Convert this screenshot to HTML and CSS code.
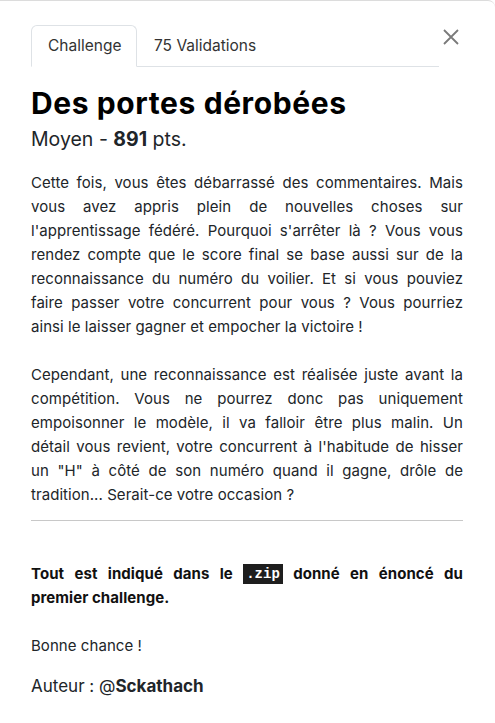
FILE: index.html
```html
<!DOCTYPE html>
<html lang="fr">
<head>
<meta charset="utf-8">
<title>Des portes dérobées</title>
<link rel="stylesheet" href="styles.css">
</head>
<body>
<div class="modal">
  <div class="modal-head">
    <ul class="tabs">
      <li class="tab active">Challenge</li>
      <li class="tab">75 Validations</li>
    </ul>
    <button class="close" aria-label="Fermer">
      <svg width="16" height="16" viewBox="0 0 16 16"><path d="M1 1L15 15M15 1L1 15" stroke="#7a7a7a" stroke-width="1.8" fill="none"/></svg>
    </button>
  </div>
  <h1 class="title">Des portes dérobées</h1>
  <p class="meta">Moyen - <b>891</b> pts.</p>
  <div class="desc">
    <p>Cette fois, vous êtes débarrassé des commentaires. Mais vous avez appris plein de nouvelles choses sur l'apprentissage fédéré. Pourquoi s'arrêter là ? Vous vous rendez compte que le score final se base aussi sur de la reconnaissance du numéro du voilier. Et si vous pouviez faire passer votre concurrent pour vous ? Vous pourriez ainsi le laisser gagner et empocher la victoire !</p>
    <p class="lines">
      <span class="ln">Cependant, une reconnaissance est réalisée juste avant la</span>
      <span class="ln">compétition. Vous ne pourrez donc pas uniquement</span>
      <span class="ln">empoisonner le modèle, il va falloir être plus malin. Un</span>
      <span class="ln">détail vous revient, votre concurrent à l'habitude de hisser</span>
      <span class="ln">un "H" à côté de son numéro quand il gagne, drôle de</span>
      <span class="ln">tradition... Serait-ce votre occasion ?</span>
    </p>
    <hr class="sep">
    <p class="strong">Tout est indiqué dans le <code>.zip</code> donné en énoncé du premier challenge.</p>
    <p>Bonne chance !</p>
  </div>
  <p class="author">Auteur : @<b>Sckathach</b></p>
</div>
</body>
</html>
```
FILE: styles.css
```css
* { box-sizing: border-box; }
html, body { margin: 0; padding: 0; background: #fff; }
body {
  font-family: Inter, "Noto Sans", sans-serif;
  color: #212529;
}
.modal {
  min-height: 723px;
  padding: 24px 32px 20px 31px;
  border-top: 1px solid #dcdcdc;
  border-top-right-radius: 7px;
}
.modal-head {
  display: flex;
  align-items: flex-start;
}
.tabs {
  list-style: none;
  margin: 0;
  padding: 0;
  display: flex;
  width: 408px;
  border-bottom: 1px solid #dee2e6;
}
.tab {
  padding: 8px 16px;
  font-size: 15.5px;
  line-height: 24px;
  color: #333;
  border: 1px solid transparent;
  border-top-left-radius: 6px;
  border-top-right-radius: 6px;
  margin-bottom: -1px;
}
.tab.active {
  border-color: #dee2e6 #dee2e6 #fff;
  background: #fff;
  width: 106px;
}
.close {
  margin: 4px 0 0 4px;
  padding: 0;
  border: 0;
  background: none;
  width: 16px;
  height: 16px;
  display: block;
}
.close svg { display: block; }
.title {
  margin: 18px 0 0;
  font-size: 30px;
  line-height: 36px;
  font-weight: 700;
  letter-spacing: 0.6px;
  color: #000;
}
.meta {
  margin: 3px 0 0;
  font-size: 19.5px;
  line-height: 30px;
}
.meta b { font-weight: 700; }
.desc {
  margin-top: 17px;
  font-size: 15px;
  line-height: 24px;
  text-align: justify;
  letter-spacing: 0.06px;
}
.desc p { margin: 0 0 24px; }
.lines .ln {
  display: block;
  white-space: nowrap;
  text-align-last: justify;
}
.lines .ln:last-child { text-align-last: auto; }
.sep {
  border: 0;
  border-top: 1px solid #c8c8c8;
  margin: -11px 0 41px;
}
.strong {
  color: #111;
  font-weight: 700;
}
code {
  display: inline-block;
  vertical-align: top;
  margin-top: 2px;
  font-family: "Liberation Mono", "DejaVu Sans Mono", monospace;
  font-size: 14px;
  line-height: 20px;
  font-weight: 700;
  letter-spacing: 0;
  background: #1e1e1e;
  color: #fff;
  padding: 0 3px;
}
.desc p:last-child { margin-bottom: 0; }
.author {
  margin: 14px 0 0;
  font-size: 17px;
  line-height: 28px;
}
.author b { font-weight: 700; }
```
